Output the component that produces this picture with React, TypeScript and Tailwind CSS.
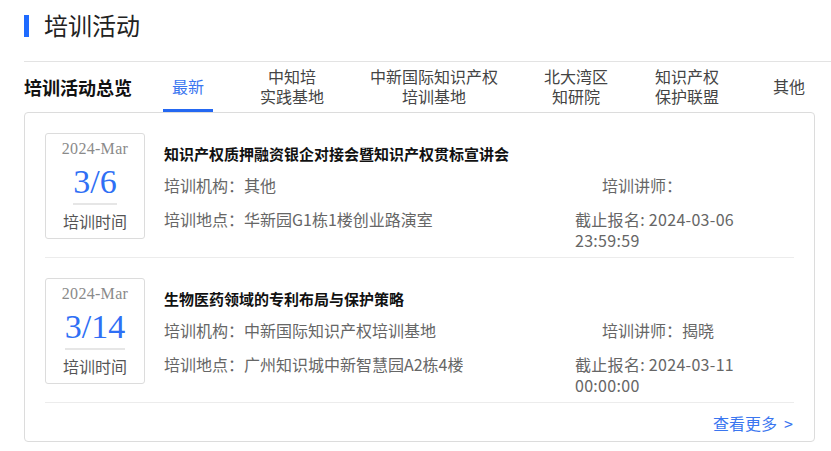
import React from "react";

const font = { fontFamily: '"Noto Sans CJK SC", "Noto Sans", sans-serif' };

type Item = {
  day: string;
  title: string;
  org: string;
  teacher: string;
  place: string;
  deadline1: string;
  deadline2: string;
};

const items: Item[] = [
  {
    day: "3/6",
    title: "知识产权质押融资银企对接会暨知识产权贯标宣讲会",
    org: "其他",
    teacher: "",
    place: "华新园G1栋1楼创业路演室",
    deadline1: "2024-03-06",
    deadline2: "23:59:59",
  },
  {
    day: "3/14",
    title: "生物医药领域的专利布局与保护策略",
    org: "中新国际知识产权培训基地",
    teacher: "揭晓",
    place: "广州知识城中新智慧园A2栋4楼",
    deadline1: "2024-03-11",
    deadline2: "00:00:00",
  },
];

function Row({ item }: { item: Item }) {
  return (
    <div className="border-b border-[#ececec] pt-5 pb-[18px]">
      <div className="flex h-[106px]">
        <div className="flex h-[106px] w-[100px] shrink-0 flex-col items-center rounded-[3px] border border-[#dcdcdc]">
          <div
            className="mt-[5px] text-[16px] leading-[20px] tracking-[0.3px] text-[#8a8a8a]"
            style={{ fontFamily: '"Liberation Serif", serif' }}
          >
            2024-Mar
          </div>
          <div
            className="mt-[3px] border-b-2 border-[#e6e6e6] pb-[1px] text-[34px] leading-[40px] text-[#2f6ff5]"
            style={{ fontFamily: '"Liberation Serif", serif' }}
          >
            {item.day}
          </div>
          <div className="mt-[4px] text-[16px] leading-[24px] text-[#555]">培训时间</div>
        </div>
        <div className="ml-[19px] flex flex-col">
          <div className="mt-[10px] text-[15px] font-bold leading-[22px] text-[#111]">{item.title}</div>
          <div className="mt-[10px] flex text-[16px] leading-[21px] text-[#666]">
            <div className="w-[438px]">培训机构：{item.org}</div>
            <div>培训讲师：{item.teacher}</div>
          </div>
          <div className="mt-[13px] flex text-[16px] leading-[21px] text-[#666]">
            <div className="w-[411px] shrink-0">培训地点：{item.place}</div>
            <div className="w-[190px] tracking-[0.3px]">
              截止报名: {item.deadline1} {item.deadline2}
            </div>
          </div>
        </div>
      </div>
    </div>
  );
}

export default function App() {
  const tabs: { lines: string[]; w: string; ml: string; active?: boolean }[] = [
    { lines: ["最新"], w: "w-[50px]", ml: "ml-0", active: true },
    { lines: ["中知培", "实践基地"], w: "w-[80px]", ml: "ml-[39px]" },
    { lines: ["中新国际知识产权", "培训基地"], w: "w-[140px]", ml: "ml-[32px]" },
    { lines: ["北大湾区", "知研院"], w: "w-[80px]", ml: "ml-[32px]" },
    { lines: ["知识产权", "保护联盟"], w: "w-[80px]", ml: "ml-[31px]" },
    { lines: ["其他"], w: "w-[50px]", ml: "ml-[37px]" },
  ];
  return (
    <div className="h-[451px] w-[831px] overflow-hidden bg-white" style={font}>
      <div className="flex h-[61px] items-start pl-6 pt-[15px]">
        <div className="h-[22px] w-[5px] bg-[#1f6bff]" />
        <div className="ml-[15px] mt-[-6px] text-[24px] leading-[32px] text-[#222]">培训活动</div>
      </div>
      <div className="ml-6 flex h-[51px] border-t border-[#e3e3e3]">
        <div className="flex w-[139px] items-center text-[18px] font-bold text-[#111]">培训活动总览</div>
        {tabs.map((t, i) => (
          <div key={i} className={`${t.w} ${t.ml} relative flex flex-col items-center justify-center pb-[3px]`}>
            <div className={`text-center text-[16px] leading-[20px] ${t.active ? "text-[#3a76f0]" : "text-[#444]"}`}>
              {t.lines.map((l, j) => (
                <React.Fragment key={j}>
                  {j > 0 && <br />}
                  {l}
                </React.Fragment>
              ))}
            </div>
            {t.active && <div className="absolute bottom-0 left-0 h-[3px] w-full bg-[#2468f2]" />}
          </div>
        ))}
      </div>
      <div className="ml-6 h-[330px] w-[791px] rounded-[4px] border border-[#dcdcdc] px-5">
        {items.map((it, i) => (
          <Row key={i} item={it} />
        ))}
        <div className="flex justify-end pt-[10px]">
          <div className="mr-[1px] flex text-[16px] leading-[21px] text-[#3a76f0]">
            <span>查看更多</span>
            <span className="ml-[7px]">&gt;</span>
          </div>
        </div>
      </div>
    </div>
  );
}
